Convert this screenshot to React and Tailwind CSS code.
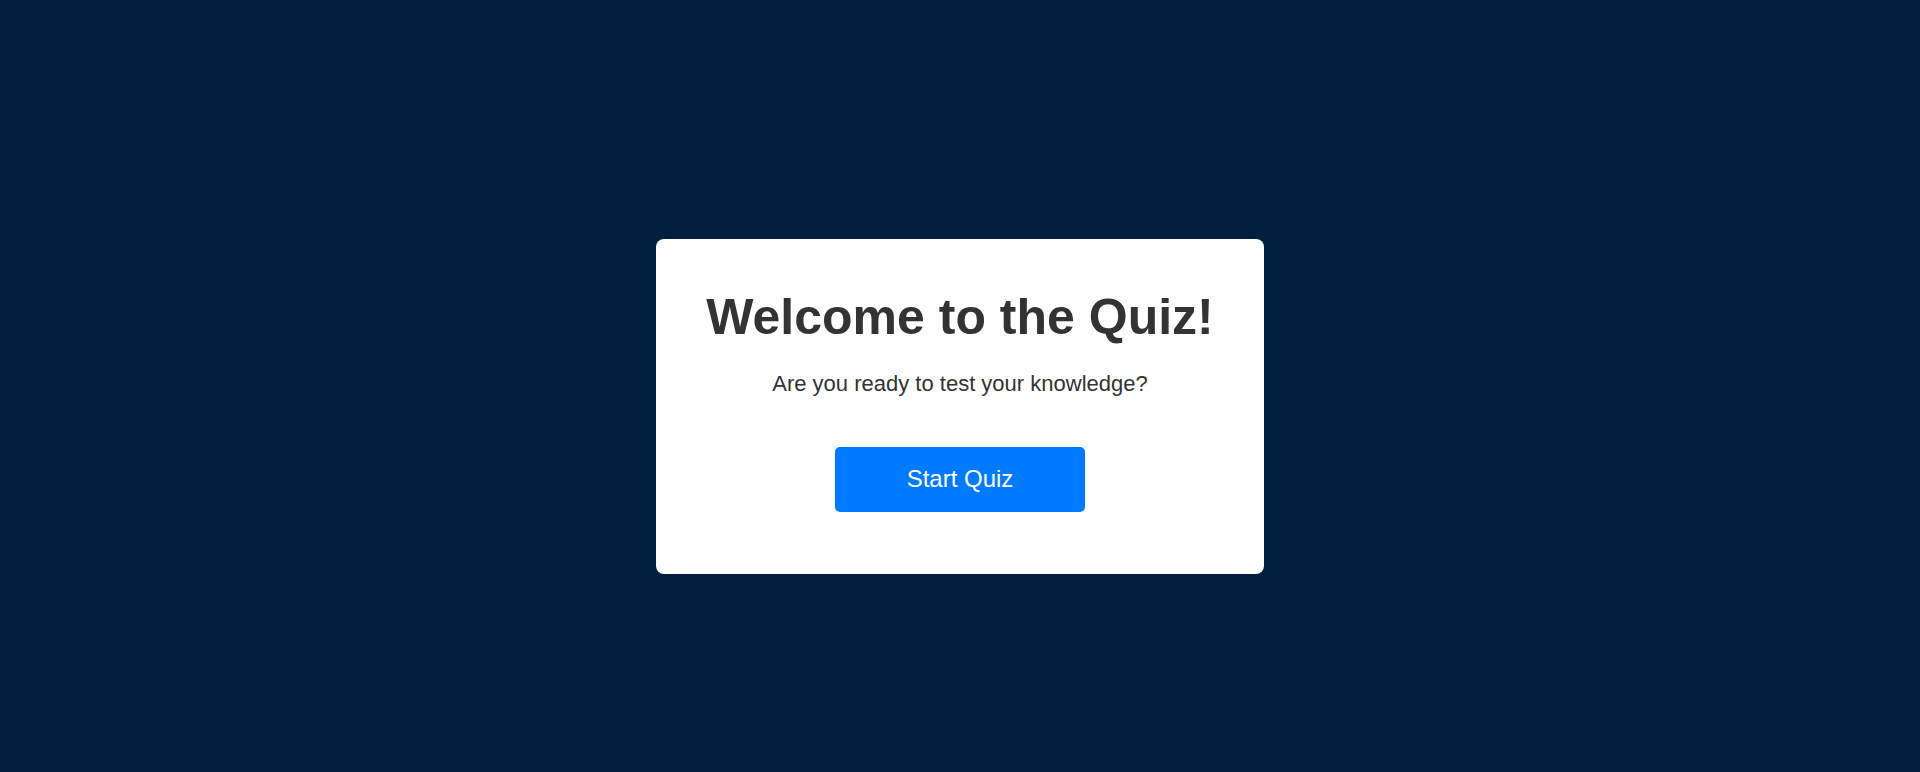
export default function App() {
  return (
    <div
      className="min-h-[772px] w-full bg-[#001f3f] flex items-center justify-center pt-[40px]"
      style={{ fontFamily: '"Liberation Sans", Arial, sans-serif' }}
    >
      <div className="w-[608px] bg-white rounded-[8px] flex flex-col items-center pt-[50px] pb-[62px]">
        <h1 className="text-[50px] leading-[57px] font-bold text-[#333333]">Welcome to the Quiz!</h1>
        <p className="mt-[25px] text-[22px] leading-[25px] text-[#333333]">Are you ready to test your knowledge?</p>
        <button className="mt-[51px] w-[250px] h-[65px] bg-[#007bff] text-white text-[24px] rounded-[5px] flex items-center justify-center">
          Start Quiz
        </button>
      </div>
    </div>
  );
}
